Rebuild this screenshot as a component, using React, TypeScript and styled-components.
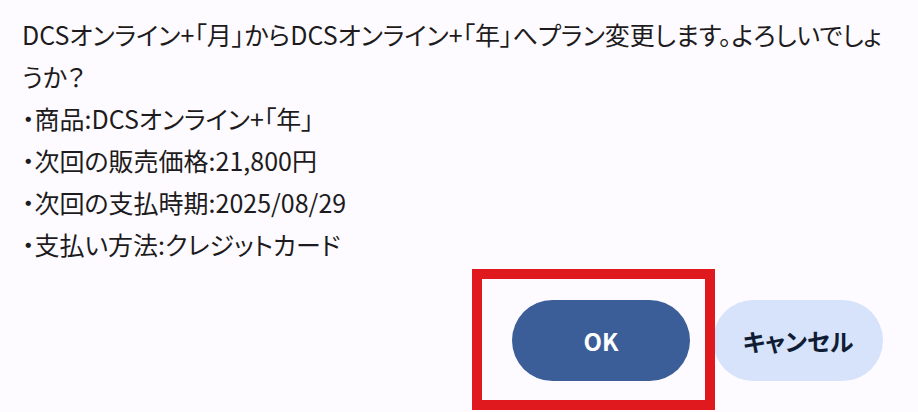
import React from "react";
import styled, { createGlobalStyle } from "styled-components";

const GlobalStyle = createGlobalStyle`
  html, body {
    margin: 0;
    padding: 0;
    background: #fdfbff;
  }
  body {
    font-family: "Noto Sans CJK JP", "Noto Sans", sans-serif;
    color: #1d1b20;
  }
`;

const Dialog = styled.div`
  width: 918px;
  height: 412px;
  box-sizing: border-box;
  padding: 13px 35px 0 22px;
  display: flex;
  flex-direction: column;
  overflow: hidden;
`;

const Message = styled.div`
  font-size: 25px;
  line-height: 42px;
  width: 860px;
  font-feature-settings: "palt";
`;

const Line = styled.div``;

const Actions = styled.div`
  margin-top: 35px;
  display: flex;
  justify-content: flex-end;
  gap: 23px;
`;

const PillButton = styled.button<{ $primary?: boolean }>`
  position: relative;
  height: 81px;
  width: ${(p) => (p.$primary ? "178px" : "170px")};
  border: none;
  border-radius: 41px;
  font-family: "Noto Sans CJK JP", "Noto Sans", sans-serif;
  font-size: 24px;
  font-weight: 700;
  font-feature-settings: "palt";
  background: ${(p) => (p.$primary ? "#3b5e98" : "#d6e3fb")};
  color: ${(p) => (p.$primary ? "#ffffff" : "#0f1c33")};
  cursor: pointer;
`;

/* annotation box drawn on top of the OK button */
const Highlight = styled.span`
  position: absolute;
  left: -40px;
  top: -31px;
  right: -25px;
  bottom: -29px;
  border: 10px solid #e0191e;
  pointer-events: none;
  z-index: 2;
`;

const details = [
  "・商品:DCSオンライン+「年」",
  "・次回の販売価格:21,800円",
  "・次回の支払時期:2025/08/29",
  "・支払い方法:クレジットカード",
];

export default function App() {
  return (
    <>
      <GlobalStyle />
      <Dialog>
        <Message>
          <Line>
            DCSオンライン+「月」からDCSオンライン+「年」へプラン変更します。よろしいでしょうか？
          </Line>
          {details.map((d) => (
            <Line key={d}>{d}</Line>
          ))}
        </Message>
        <Actions>
          <PillButton $primary>
            OK
            <Highlight />
          </PillButton>
          <PillButton>キャンセル</PillButton>
        </Actions>
      </Dialog>
    </>
  );
}
